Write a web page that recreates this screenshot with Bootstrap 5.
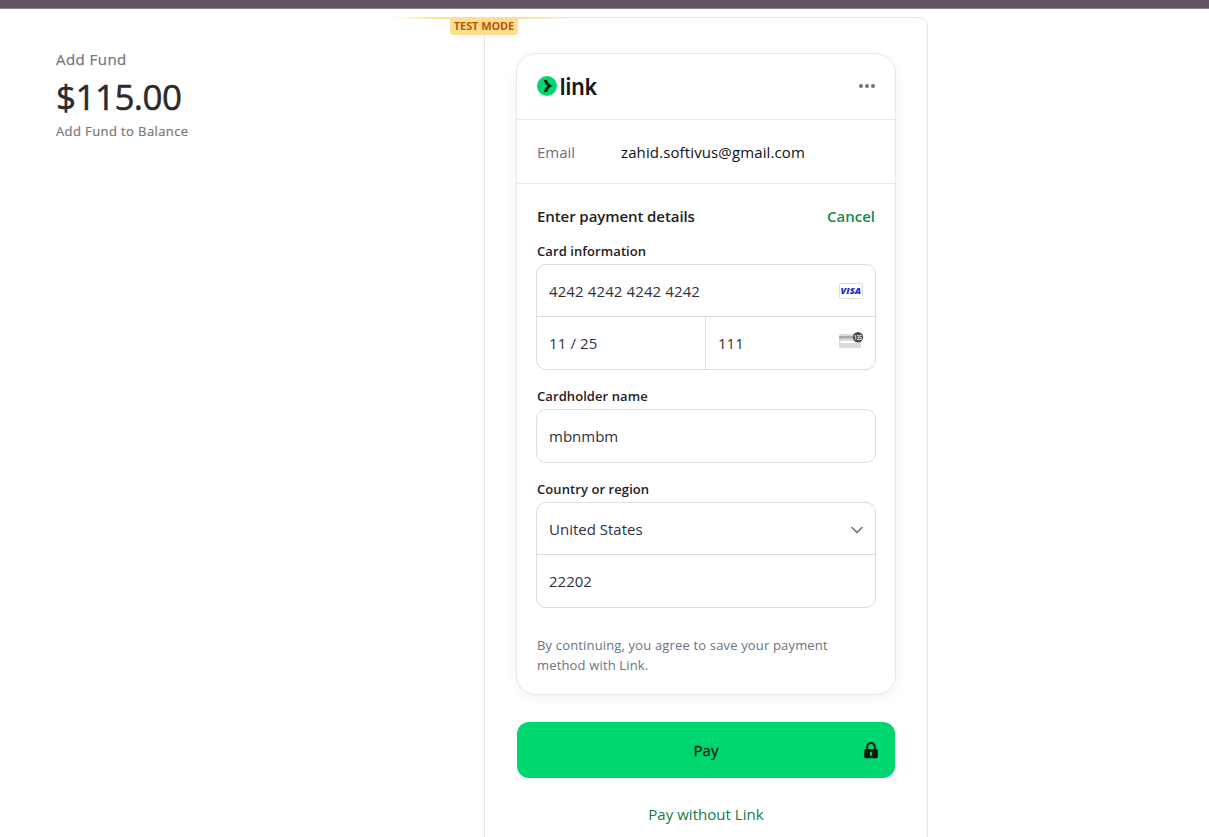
<!DOCTYPE html>
<html lang="en">
<head>
<meta charset="utf-8">
<meta name="viewport" content="width=device-width, initial-scale=1">
<title>Add Fund</title>
<link href="https://cdn.jsdelivr.net/npm/bootstrap@5.3.0/dist/css/bootstrap.min.css" rel="stylesheet">
<style>
body{font-family:"Open Sans","Noto Sans",sans-serif;font-size:15px;line-height:20px;color:#1f2124;background:#fff;height:837px;overflow:hidden}
.topbar{height:9px;background:#64535f;border-bottom:1px solid #8c7f88}
.checkout{height:828px}
.summary{width:484px;padding:39px 0 0 56px;color:#76777b}
.summary .item{font-size:15px;line-height:22px;letter-spacing:.45px;-webkit-text-stroke:.25px}
.summary .amount{font-size:35px;line-height:44px;margin-top:5px;color:#2a2a2c;letter-spacing:-.55px;-webkit-text-stroke:.5px}
.summary .note{font-size:13px;line-height:20px;margin-top:2px;letter-spacing:.4px;-webkit-text-stroke:.2px}
.pay-frame{width:444px;height:840px;margin-top:8px;border:1px solid #e6e6e6;border-radius:10px 10px 0 0;padding:35px 31px 0}
.test-line{left:390px;top:8px;width:180px;height:2px;background:linear-gradient(90deg,#ffde9200,#ffde92 28%,#ffde92 72%,#ffde9200)}
.test-tag{left:450px;top:8px;width:68px;height:18px;background:#ffde92;border-radius:0 0 4px 4px;color:#bb5504;font-size:11px;letter-spacing:-.1px;font-weight:700;line-height:18px}
.link-card{height:642px;border:1px solid #e9e9ea;border-radius:20px;box-shadow:0 4px 12px rgba(0,0,0,.05);--bs-card-bg:#fff}
.link-head{height:66px;padding:0 20px 2px;border-bottom:1px solid #ebebec}
.wordmark{font-family:Inter,sans-serif;font-size:23.5px;font-weight:600}
.email-row{height:64px;padding:0 20px;border-bottom:1px solid #ebebec}
.email-row .key{width:84px;color:#6a7383}
.email-row .val{color:#101112;letter-spacing:.12px}
.details{padding:0 19px}
.heading-row{padding-top:22px;margin-bottom:15px}
.field-group{margin-bottom:16px}
.details h2{font-size:15px;font-weight:600;line-height:20px;letter-spacing:-.08px;margin:0 0 0 1px}
.cancel{color:#118a4f;font-weight:600;margin-right:1px;text-decoration:none}
.field-label{font-size:13px;font-weight:600;line-height:20px;letter-spacing:.08px;margin:0 0 3px 1px;display:block}
.field-box{border:1px solid #d8dee4;border-radius:10px}
.cell{height:52px;padding:0 12px;color:#30313d}
.cell-first{height:51px}
.cell-last{height:53px}
.digits{letter-spacing:.11px}
.split{border-top:1px solid #d8dee4}
.split-right{border-right:1px solid #d8dee4}
.cvc{margin-bottom:6px}
.chevron{margin-top:2px}
.terms{font-size:13px;line-height:20px;letter-spacing:.16px;color:#6a7383;margin:27px 0 0 1px}
.pay-btn{height:56px;margin:27px 1px 0;background:#00d66f;border:0;border-radius:12px;color:#011e0f;font-size:15px;-webkit-text-stroke:.3px}
.pay-btn:hover{background:#00c767}
.pay-btn svg{right:16px;top:20px}
.without{margin-top:26px;color:#0e8048;text-decoration:none;letter-spacing:.03px}
</style>
</head>
<body>
<div class="topbar"></div>
<main class="checkout d-flex position-relative">
  <section class="summary flex-shrink-0">
    <div class="item">Add Fund</div>
    <div class="amount">$115.00</div>
    <div class="note">Add Fund to Balance</div>
  </section>
  <section class="pay-frame flex-shrink-0 d-flex flex-column">
    <div class="card link-card flex-shrink-0">
      <header class="link-head d-flex align-items-center justify-content-between">
        <svg class="overflow-visible" width="62" height="24" viewBox="0 0 62 24">
          <circle cx="10" cy="12" r="10" fill="#00d66f"/>
          <path d="M6.800 6H10c.7 2.700 2.600 4.800 5.300 6-2.700 1.200-4.600 3.300-5.300 6H6.800c.6-2.600 1.900-4.600 3.900-6-2-1.400-3.300-3.400-3.900-6z" fill="#011e0f"/>
          <text class="wordmark" x="22.800" y="20.700" textLength="37.500" lengthAdjust="spacingAndGlyphs" fill="#171717">link</text>
        </svg>
        <svg width="16" height="6" viewBox="0 0 16 6" fill="#6a7383"><circle cx="2" cy="3" r="2"/><circle cx="8" cy="3" r="2"/><circle cx="14" cy="3" r="2"/></svg>
      </header>
      <div class="email-row d-flex align-items-center">
        <span class="key">Email</span><span class="val">zahid.softivus@gmail.com</span>
      </div>
      <div class="details">
        <div class="heading-row d-flex justify-content-between">
          <h2>Enter payment details</h2><a class="cancel" href="#">Cancel</a>
        </div>
        <div class="field-group">
          <label class="field-label">Card information</label>
          <div class="field-box">
            <div class="cell cell-first d-flex align-items-center justify-content-between"><span class="digits">4242 4242 4242 4242</span>
              <svg width="24" height="16" viewBox="0 0 24 16"><rect x=".5" y=".5" width="23" height="15" rx="1" fill="#fff" stroke="#dedede"/><text x="1.600" y="11" font-family="Open Sans, sans-serif" font-size="9.200" font-weight="800" font-style="italic" textLength="20.500" lengthAdjust="spacingAndGlyphs" fill="#1a2fc4">VISA</text></svg>
            </div>
            <div class="split row g-0">
              <div class="col-6 cell split-right d-flex align-items-center digits">11 / 25</div>
              <div class="col-6 cell d-flex align-items-center justify-content-between"><span>111</span>
                <svg class="cvc overflow-visible" width="24" height="17" viewBox="0 0 24 17"><rect x="0" y="2" width="22" height="14" rx="1.500" fill="#dadada"/><rect y="4" width="22" height="2.500" fill="#a8a8a8"/><rect x="1.500" y="9" width="18.500" height="2" fill="#fff"/><circle cx="19" cy="5.300" r="5.200" fill="#4b4b4b"/><text x="15" y="7.600" font-size="6.200" font-weight="600" textLength="8" lengthAdjust="spacingAndGlyphs" fill="#fff">135</text></svg>
              </div>
            </div>
          </div>
        </div>
        <div class="field-group">
          <label class="field-label">Cardholder name</label>
          <div class="field-box"><div class="cell d-flex align-items-center">mbnmbm</div></div>
        </div>
        <div class="field-group">
          <label class="field-label">Country or region</label>
          <div class="field-box">
            <div class="cell cell-first d-flex align-items-center justify-content-between"><span>United States</span>
              <svg class="chevron" width="12" height="8" viewBox="0 0 12 8" fill="none" stroke="#6a7383" stroke-width="1.600" stroke-linecap="round" stroke-linejoin="round"><path d="M1 1.500l5 5 5-5"/></svg>
            </div>
            <div class="cell cell-last split d-flex align-items-center">22202</div>
          </div>
        </div>
        <p class="terms">By continuing, you agree to save your payment<br>method with Link.</p>
      </div>
    </div>
    <button class="btn pay-btn position-relative flex-shrink-0">Pay
      <svg class="position-absolute" width="16" height="17" viewBox="0 0 16 17"><path d="M4.200 8V4.800a3.800 3.800 0 0 1 7.600 0V8" fill="none" stroke="#011e0f" stroke-width="2"/><rect x="1.200" y="7" width="13.600" height="9.300" rx="1.800" fill="#011e0f"/><rect x="7" y="9.700" width="2" height="4" rx=".8" fill="#00d66f"/></svg>
    </button>
    <a class="without text-center" href="#">Pay without Link</a>
  </section>
  <div class="test-line position-absolute"></div>
  <div class="test-tag position-absolute text-center">TEST MODE</div>
</main>
<script src="https://cdn.jsdelivr.net/npm/bootstrap@5.3.0/dist/js/bootstrap.bundle.min.js"></script>
</body>
</html>
